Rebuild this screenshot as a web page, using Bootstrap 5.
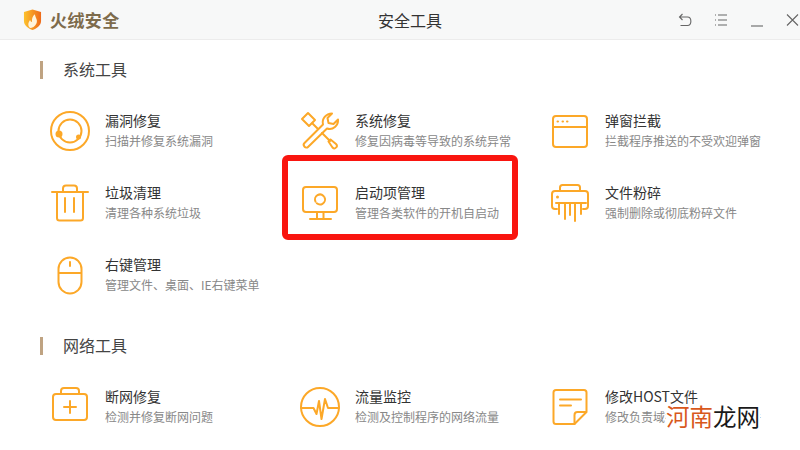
<!DOCTYPE html>
<html lang="zh-CN">
<head>
  <meta charset="UTF-8" />
  <title>安全工具</title>
  <link href="https://cdn.jsdelivr.net/npm/bootstrap@5.3.3/dist/css/bootstrap.min.css" rel="stylesheet">
  <style>
    html, body { width: 800px; height: 450px; overflow: hidden; background: #fff; }
    body { font-family: "Noto Sans CJK SC", "Liberation Sans", sans-serif; color: #333; }
    .app-head { height: 40px; background: #f7f8f8; border-bottom: 1px solid #ececec; }
    .brand-mark { width: 19px; height: 22px; margin-left: 23px; }
    .brand-name { margin-left: 8px; font-size: 17px; font-weight: 700; color: #7d6b4c; letter-spacing: .4px; }
    .head-title { left: 20px; right: 0; top: 0; line-height: 41px; font-size: 16px; text-align: center; color: #333; }
    .head-tools { gap: 22px; margin-left: auto; }
    .head-tools svg { width: 14px; height: 14px; fill: none; stroke: #666; stroke-width: 1.1; }
    .section-head { height: 18px; margin-left: 40px; padding-left: 20px; border-left: 3px solid #bfa382; font-size: 16px; line-height: 16px; color: #444; }
    .sec-one { margin-top: 21px; }
    .sec-two { margin-top: 26px; }
    .tool-grid { display: grid; grid-template-columns: repeat(3, 250px); grid-auto-rows: 72px; margin: 16px 0 0 50px; }
    .tool-item { gap: 15px; }
    .tool-item svg { width: 40px; height: 40px; flex: none; fill: none; stroke: #fca828; stroke-width: 2; stroke-linecap: round; stroke-linejoin: round; }
    .tool-text { padding-bottom: 1px; }
    .tool-name { font-size: 14px; line-height: 20px; color: #333; white-space: nowrap; }
    .tool-desc { margin-top: 1px; font-size: 12px; line-height: 20px; color: #888; white-space: nowrap; }
    .red-frame { left: 282px; top: 155px; width: 236px; height: 85px; border: 6px solid #f9150f; border-radius: 6px; }
    .mark-text { left: 666px; top: 404px; font-size: 23.500px; line-height: 24px; color: #1a1a1a; background: #fff; white-space: nowrap; }
    .mark-text span { color: #d8581c; }
  </style>
</head>
<body class="position-relative">

  <header class="app-head d-flex align-items-center position-relative">
    <div class="head-title position-absolute">安全工具</div>
    <svg class="brand-mark" viewBox="0 0 20 22">
      <defs>
        <linearGradient id="shieldFill" x1="0" x2="1" y1="0" y2="0">
          <stop offset="0" stop-color="#fdc22c"/>
          <stop offset="1" stop-color="#ee6a1a"/>
        </linearGradient>
      </defs>
      <path d="M10 0 L19 2.500 V12 C19 17 14 20 10 21.500 C6 20 1 17 1 12 V2.500 Z" fill="url(#shieldFill)"/>
      <path d="M12.500 5 C13 9 16 11 14 15 C12.800 18 9.500 19.500 7.500 19.500 C5 17.500 5 14 7.500 11 C8 12.500 8.500 13 9.500 13 C9 10 10 7 12.500 5 Z" fill="#fff4dc"/>
    </svg>
    <span class="brand-name">火绒安全</span>
    <div class="head-tools d-flex align-items-center">
      <svg viewBox="0 0 14 14"><path d="M4.500 1 L1.500 4 L4.500 7 M1.500 4 H9.500 C14 4 14 12.500 9.500 12.500 H2.500"/></svg>
      <svg viewBox="0 0 14 14"><path d="M4 2 H13 M4 7 H13 M4 12 H13 M1 2 H2 M1 7 H2 M1 12 H2"/></svg>
      <svg viewBox="0 0 14 14"><path d="M1 13 H13"/></svg>
      <svg viewBox="0 0 14 14"><path d="M1 1.500 L12 12.500 M12 1.500 L1 12.500"/></svg>
    </div>
  </header>

  <main>
    <div class="section-head sec-one">系统工具</div>
    <div class="tool-grid">
      <div class="tool-item d-flex align-items-center">
        <svg viewBox="0 0 40 40">
          <circle cx="20" cy="20" r="19"/>
          <circle cx="20" cy="20" r="11.500"/>
          <circle cx="9" cy="23" r="3.500" fill="#fca828" stroke="none"/>
          <circle cx="28.500" cy="26" r="2.500" fill="#fca828" stroke="none"/>
        </svg>
        <div class="tool-text"><div class="tool-name">漏洞修复</div><div class="tool-desc">扫描并修复系统漏洞</div></div>
      </div>
      <div class="tool-item d-flex align-items-center">
        <svg viewBox="0 0 40 40">
          <path d="M23 13.500 C21.500 8 26 2.500 32 2.500 L27.500 7 L28.500 12 L33.500 13 L38 8.500 C38.500 14.500 33 19.500 27 17.500 L8 36 C6 38 2 34.500 4.500 32 Z"/>
          <path d="M2 8 L8 2 L15 9 L9 15 Z"/>
          <path d="M12.500 12.500 L17.500 17.500 M22 22 L30 30"/>
          <path d="M28.500 30.500 a3 3 0 0 1 2 -2 L36 33 q2 2 0 3.500 q-1.500 2 -3.500 0 Z"/>
        </svg>
        <div class="tool-text"><div class="tool-name">系统修复</div><div class="tool-desc">修复因病毒等导致的系统异常</div></div>
      </div>
      <div class="tool-item d-flex align-items-center">
        <svg viewBox="0 0 40 40">
          <rect x="3" y="5" width="34" height="31" rx="3"/>
          <path d="M3 16 H37"/>
          <path d="M7.500 10.500 H8 M12.500 10.500 H13 M17 10.500 H17.500"/>
        </svg>
        <div class="tool-text"><div class="tool-name">弹窗拦截</div><div class="tool-desc">拦截程序推送的不受欢迎弹窗</div></div>
      </div>

      <div class="tool-item d-flex align-items-center">
        <svg viewBox="0 0 40 40">
          <path d="M2 9 H38"/>
          <path d="M13 9 V5.500 a3 3 0 0 1 3 -3 H24 a3 3 0 0 1 3 3 V9"/>
          <path d="M7 9 V35 a2.500 2.500 0 0 0 2.500 2.500 H30.500 a2.500 2.500 0 0 0 2.500 -2.500 V9"/>
          <path d="M15 15 V29 M24 15 V29"/>
        </svg>
        <div class="tool-text"><div class="tool-name">垃圾清理</div><div class="tool-desc">清理各种系统垃圾</div></div>
      </div>
      <div class="tool-item d-flex align-items-center">
        <svg viewBox="0 0 40 40">
          <rect x="3" y="4" width="34" height="25" rx="3"/>
          <path d="M17 29 V35 M23.500 29 V35 M10 36 H31"/>
          <circle cx="20" cy="16.500" r="5" stroke-dasharray="13.500 2.200" transform="rotate(-30 20 16.500)"/>
        </svg>
        <div class="tool-text"><div class="tool-name">启动项管理</div><div class="tool-desc">管理各类软件的开机自启动</div></div>
      </div>
      <div class="tool-item d-flex align-items-center">
        <svg viewBox="0 0 40 40">
          <path d="M10 8 V4.500 a2.500 2.500 0 0 1 2.500 -2.500 H27.500 a2.500 2.500 0 0 1 2.500 2.500 V8"/>
          <path d="M7 26 H5 a3 3 0 0 1 -3 -3 V11 a3 3 0 0 1 3 -3 H35 a3 3 0 0 1 3 3 V23 a3 3 0 0 1 -3 3 H33"/>
          <path d="M6 20 H36"/>
          <path d="M9 20 V31 M15 20 V36 M20 20 V32 M25 20 V38 M31 20 V31"/>
          <circle cx="7.500" cy="14" r="1.500" fill="#fca828" stroke="none"/>
        </svg>
        <div class="tool-text"><div class="tool-name">文件粉碎</div><div class="tool-desc">强制删除或彻底粉碎文件</div></div>
      </div>

      <div class="tool-item d-flex align-items-center">
        <svg viewBox="0 0 40 40">
          <path d="M8.500 13 a11.500 11.500 0 0 1 23 0 V26 a11.500 11.500 0 0 1 -23 0 Z" transform="translate(0 1)"/>
          <path d="M9 18 H31 M20 7 V11"/>
        </svg>
        <div class="tool-text"><div class="tool-name">右键管理</div><div class="tool-desc">管理文件、桌面、IE右键菜单</div></div>
      </div>
    </div>

    <div class="section-head sec-two">网络工具</div>
    <div class="tool-grid">
      <div class="tool-item d-flex align-items-center">
        <svg viewBox="0 0 40 40">
          <rect x="3" y="7" width="34" height="26" rx="3"/>
          <path d="M11 7 V4 a3 3 0 0 1 3 -3 H26 a3 3 0 0 1 3 3 V7"/>
          <path d="M20 14 V26 M14 20 H26"/>
        </svg>
        <div class="tool-text"><div class="tool-name">断网修复</div><div class="tool-desc">检测并修复断网问题</div></div>
      </div>
      <div class="tool-item d-flex align-items-center">
        <svg viewBox="0 0 40 40">
          <circle cx="20" cy="20" r="19"/>
          <path d="M1 21 H13.500 L16.500 27 L19 14 L21.500 32 L25 12 L28 21 H39"/>
        </svg>
        <div class="tool-text"><div class="tool-name">流量监控</div><div class="tool-desc">检测及控制程序的网络流量</div></div>
      </div>
      <div class="tool-item d-flex align-items-center">
        <svg viewBox="0 0 40 40">
          <path d="M6 3 H34 a2.500 2.500 0 0 1 2.500 2.500 V25 L24.500 37 H6 a2.500 2.500 0 0 1 -2.500 -2.500 V5.500 A2.500 2.500 0 0 1 6 3 Z"/>
          <path d="M36 25 H27.500 a3 3 0 0 0 -3 3 V37"/>
          <path d="M10 12.500 H31 M10 18.500 H21"/>
        </svg>
        <div class="tool-text"><div class="tool-name">修改HOST文件</div><div class="tool-desc">修改负责域名解析的系统文件</div></div>
      </div>
    </div>
  </main>

  <div class="red-frame position-absolute"></div>
  <div class="mark-text position-absolute"><span>河南</span>龙网</div>

  <script src="https://cdn.jsdelivr.net/npm/bootstrap@5.3.3/dist/js/bootstrap.bundle.min.js"></script>
</body>
</html>
